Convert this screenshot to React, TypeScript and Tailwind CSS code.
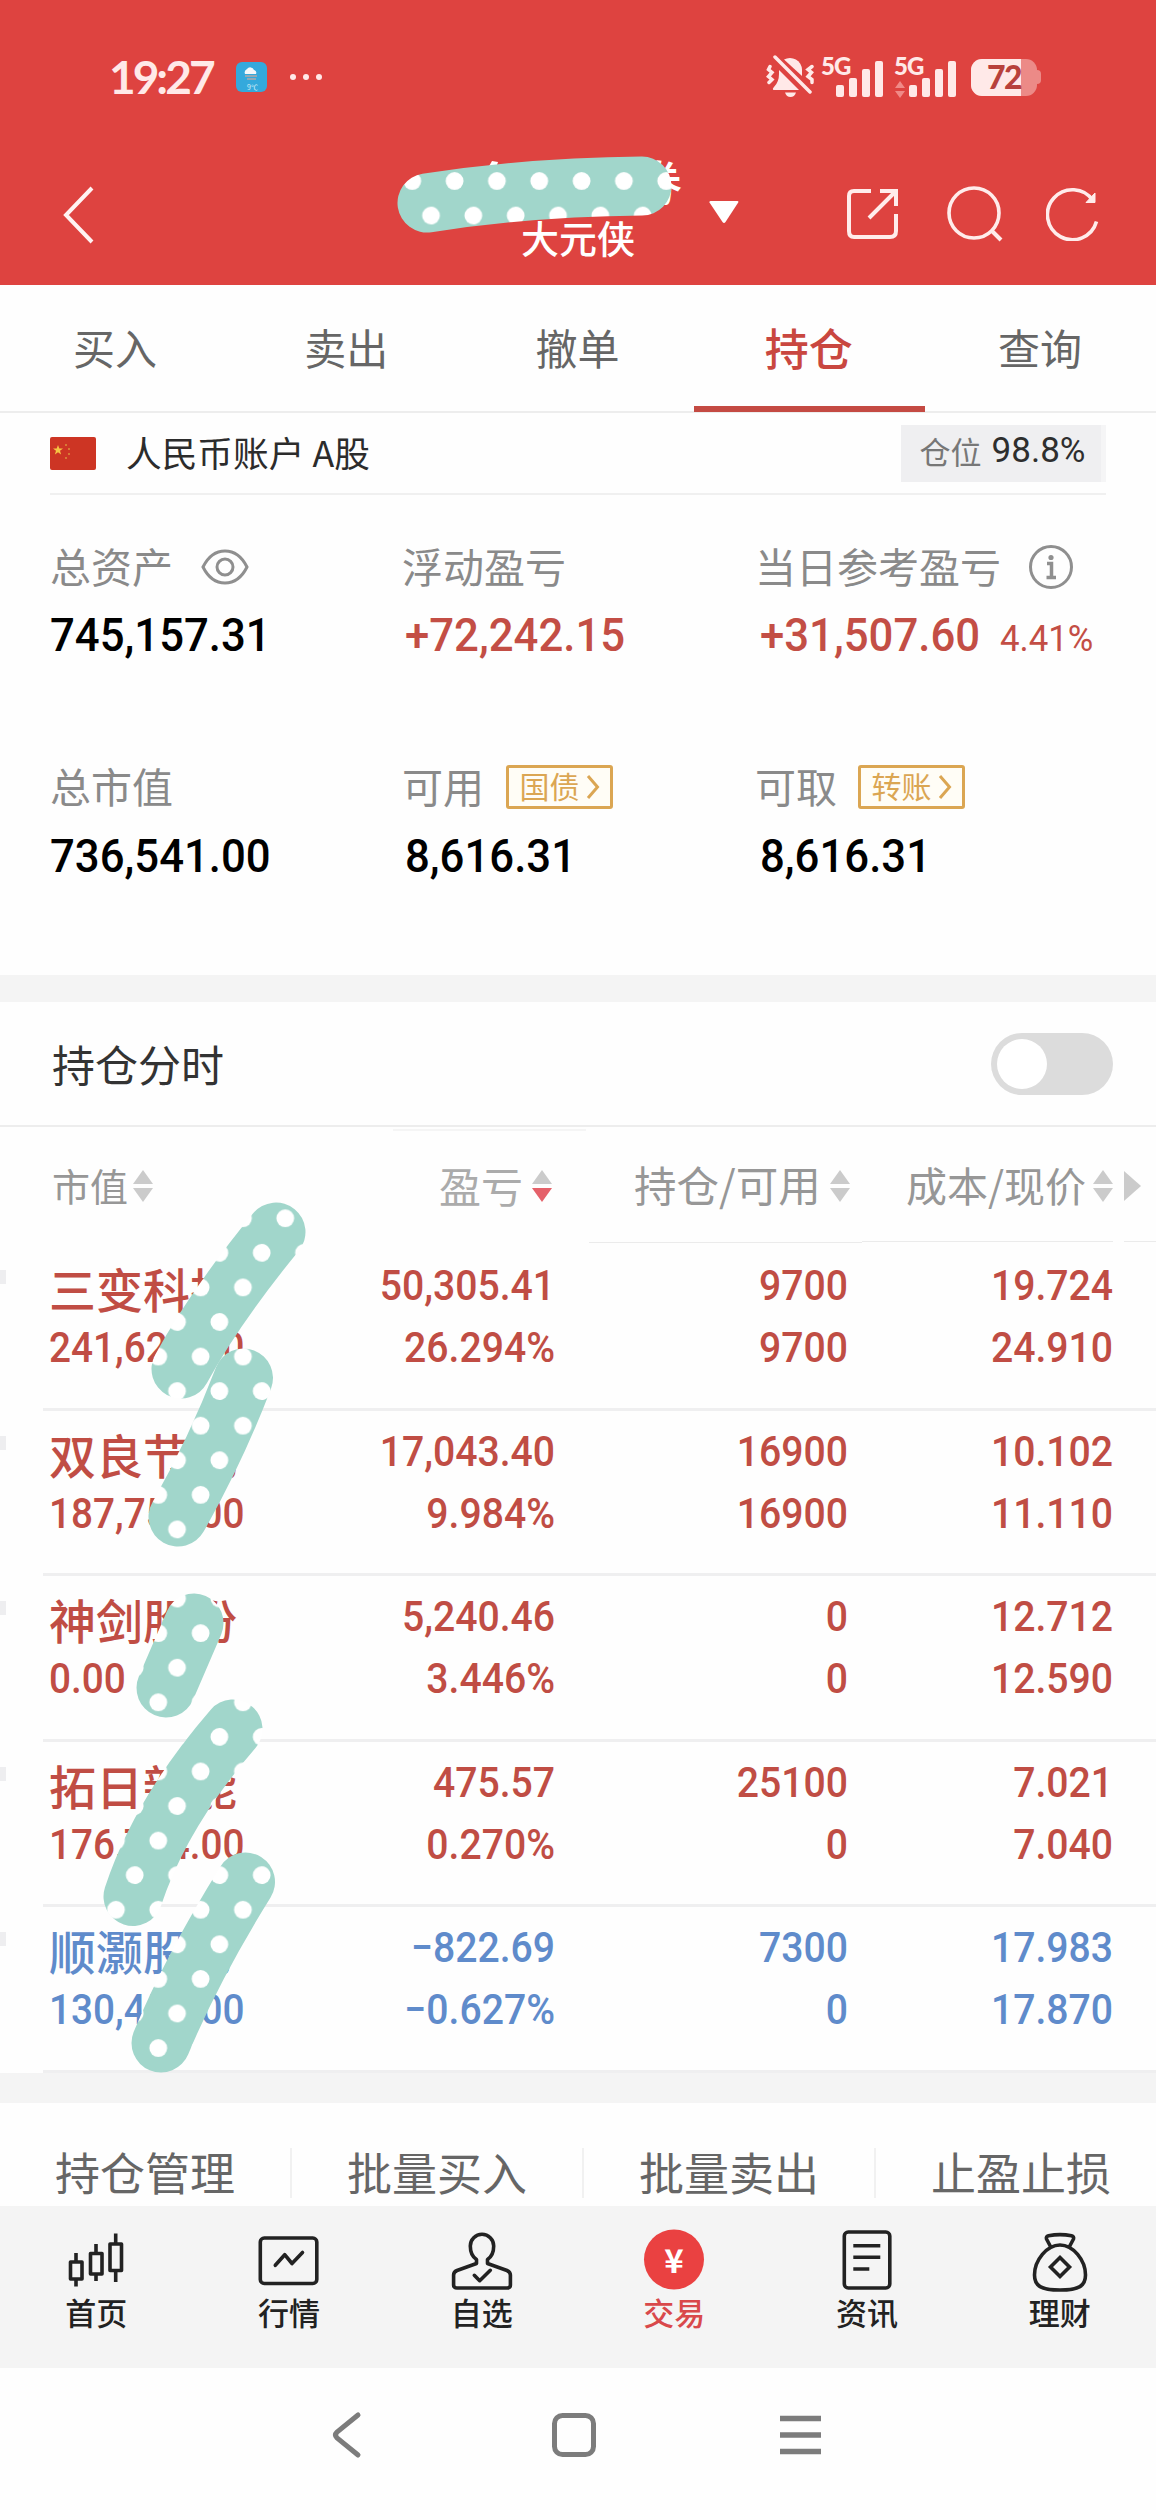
import type { ReactNode } from 'react'
import clsx from 'clsx'

interface Holding {
  name: string
  value: string
  profit: string
  rate: string
  held: string
  usable: string
  cost: string
  price: string
  down?: boolean
}

const TABS = ['买入', '卖出', '撤单', '持仓', '查询']

const HOLDINGS: Holding[] = [
  { name: '三变科技', value: '241,627.00', profit: '50,305.41', rate: '26.294%', held: '9700', usable: '9700', cost: '19.724', price: '24.910' },
  { name: '双良节能', value: '187,759.00', profit: '17,043.40', rate: '9.984%', held: '16900', usable: '16900', cost: '10.102', price: '11.110' },
  { name: '神剑股份', value: '0.00', profit: '5,240.46', rate: '3.446%', held: '0', usable: '0', cost: '12.712', price: '12.590' },
  { name: '拓日新能', value: '176,704.00', profit: '475.57', rate: '0.270%', held: '25100', usable: '0', cost: '7.021', price: '7.040' },
  { name: '顺灏股份', value: '130,451.00', profit: '−822.69', rate: '−0.627%', held: '7300', usable: '0', cost: '17.983', price: '17.870', down: true },
]

const ACTIONS = ['持仓管理', '批量买入', '批量卖出', '止盈止损']

/** Doodle strokes drawn over the private parts, as centre lines. */
const STROKES = [
  'M427 203Q530 187 642 186',
  'M276 1232Q214 1308 181 1369',
  'M243.500 1378Q216 1450 178 1517',
  'M194 1623L166 1688',
  'M233 1729Q161 1812 133 1896.500',
  'M245.500 1882Q192 1968 161 2043',
]

function SignalBars() {
  return (
    <div className="flex h-9 items-end gap-[5px]">
      <span className="h-3 w-2 rounded-[2px] bg-[#ffe9e8]" />
      <span className="h-[19px] w-2 rounded-[2px] bg-[#ffe9e8]" />
      <span className="h-7 w-2 rounded-[2px] bg-[#ffe9e8]" />
      <span className="h-9 w-2 rounded-[2px] bg-[#ffe9e8]" />
    </div>
  )
}

function StatusBar() {
  return (
    <div className="flex h-[154px] items-center pl-[109px] pr-[115px] text-[#ffe9e8]">
      <span className="w-[127px] font-['Lato'] text-[46px] font-bold leading-none tracking-[-3px]">19:27</span>
      <svg width="31" height="30" viewBox="0 0 31 30">
        <rect width="31" height="30" rx="6" fill="#34a9dc" />
        <path d="M9 12a4 4 0 0 1 2-5 4 4 0 0 1 7 1 3 3 0 0 1 2 4z" fill="#f4f8fa" />
        <path d="M9 14h12M11 17h9" stroke="#93a9b5" strokeWidth="2" />
        <text x="11" y="28" fontSize="7" fill="#d9f1fa" fontFamily="Noto Sans CJK SC, sans-serif">9℃</text>
      </svg>
      <div className="ml-[23px] flex gap-[7px]">
        <span className="size-1.5 rounded-full bg-[#ffe9e8]" />
        <span className="size-1.5 rounded-full bg-[#ffe9e8]" />
        <span className="size-1.5 rounded-full bg-[#ffe9e8]" />
      </div>

      <div className="ml-auto flex items-center">
        <svg className="mr-[-2px]" width="50" height="44" viewBox="0 0 50 44" fill="#ffe9e8">
          <path d="M18 4.500A12 12 0 0 1 36 14.500V21z" />
          <path d="M13 15L33 35H7.500Q6 34 8 32Q13 27 13 19z" />
          <path d="M19 37.500h11q-1.500 4.500-5.500 4.500t-5.500-4.500z" />
          <path
            d="M9 2L44 37M4 11.500l-1.500 3 3.500 3-3.500 4 3.500 3-3 3M46 11.500l-4 3 3.500 3-3.500 4 4 3 0 3"
            fill="none"
            stroke="#ffe9e8"
            strokeWidth="3.500"
            strokeLinecap="round"
          />
        </svg>
        <div className="ml-[7px] flex h-[42px] items-start">
          <span className="w-[15px] font-['Lato'] text-[24px] font-black leading-[20px] tracking-[-1px]">5G</span>
          <div className="pt-[5px]"><SignalBars /></div>
        </div>
        <div className="ml-[11px] flex h-[42px] items-start">
          <div className="flex w-[15px] flex-col">
            <span className="font-['Lato'] text-[24px] font-black leading-[20px] tracking-[-1px]">5G</span>
            <svg className="ml-px mt-[5px]" width="10" height="17" viewBox="0 0 10 17" fill="#f08a87">
              <path d="M5 0l5 7H0zM5 17l5-7H0z" />
            </svg>
          </div>
          <div className="pt-[5px]"><SignalBars /></div>
        </div>
        <div className="ml-[15px] flex items-center">
          <div className="flex h-[37px] w-[66px] items-center overflow-hidden rounded-[11px] bg-[#ec8a87]">
            <span className="flex h-full w-[50px] items-center justify-end bg-[#ffe9e8] font-['Lato'] text-[32px] font-black tracking-[-1.5px] text-[#b8413c]">
              72
            </span>
          </div>
          <span className="h-3.5 w-1 rounded-r bg-[#ec8a87]" />
        </div>
      </div>
    </div>
  )
}

function TitleBar() {
  return (
    <div className="flex h-[131px] pl-[61px] text-white">
      <svg className="mt-[31px]" width="34" height="60" viewBox="0 0 34 60" fill="none" stroke="#fff3f2" strokeWidth="4">
        <path d="M31 3L5 30L31 57" />
      </svg>
      <div className="ml-[379px] flex w-[208px] flex-col items-center">
        <span className="w-full text-right text-[48px] font-medium leading-[52px]">券</span>
        <span className="mt-[11px] text-[38px] font-medium leading-[40px]">大元侠</span>
      </div>
      <svg className="ml-[26px] mt-[46px]" width="32" height="24" viewBox="0 0 32 24" fill="#fff">
        <path d="M2.500 1h27q1.500 0 .7 1.500L17.500 22q-1.500 2-3 0L1.500 2.500Q1 1 2.500 1z" />
      </svg>
      <svg className="ml-[106px] mt-[34px]" width="52" height="52" viewBox="0 0 52 52" fill="none" stroke="#ffeceb" strokeWidth="4">
        <path d="M25 3H8Q3 3 3 8V43Q3 49 8 49H44Q50 49 50 43V26M34 3H50V18M50 3L23 30" />
      </svg>
      <svg className="ml-[49px] mt-[31px]" width="56" height="58" viewBox="0 0 56 58" fill="none" stroke="#ffeceb" strokeWidth="3.600">
        <circle cx="27" cy="28" r="25" />
        <path d="M44 45L54 55" strokeWidth="4" />
      </svg>
      <svg className="ml-[43px] mt-[33px]" width="54" height="54" viewBox="0 0 54 54" fill="none" stroke="#ffeceb" strokeWidth="3.600">
        <path d="M50.500 34.500A25 25 0 1 1 47 13.500" />
        <path d="M49 6V15.500H40z" fill="#ffeceb" strokeWidth="1" />
      </svg>
    </div>
  )
}

/** Numbers are set slightly narrower than the face's own width. */
function Amount({ children, red }: { children: ReactNode; red?: boolean }) {
  return (
    <span
      className={clsx(
        "inline-block origin-left scale-x-[0.93] font-['Roboto'] text-[47px] font-medium leading-[50px]",
        red ? 'text-[#c34e45]' : 'text-black',
      )}
    >
      {children}
    </span>
  )
}

function LinkTag({ label }: { label: string }) {
  return (
    <span className="flex h-[44px] w-[107px] items-center justify-center gap-1.5 rounded-[3px] border-[3px] border-[#dba653] bg-[#fffdf6] text-[30px] leading-none text-[#dba653]">
      <span className="-mt-1">{label}</span>
      <svg width="14" height="24" viewBox="0 0 14 24" fill="none" stroke="#dba653" strokeWidth="3">
        <path d="M2 1l9.500 11L2 23" />
      </svg>
    </span>
  )
}

function Stat({ label, extra, children }: { label: string; extra?: ReactNode; children: ReactNode }) {
  return (
    <div>
      <div className="flex h-[44px] items-center text-[41px] leading-[40px] text-[#8a8a8a]">
        <span className="-mt-1">{label}</span>
        {extra}
      </div>
      <div className="mt-[21px] flex h-[50px] items-center pl-[3px]">{children}</div>
    </div>
  )
}

function Summary() {
  return (
    <section className="h-[480px] pl-[50px] pt-[50px]">
      <div className="grid grid-cols-[352px_353px_1fr] gap-y-[105px]">
        <Stat
          label="总资产"
          extra={
            <svg className="ml-[28px]" width="48" height="36" viewBox="0 0 48 36" fill="none" stroke="#8f8f8f" strokeWidth="3">
              <path d="M2 18Q10 2 24 2T46 18Q38 34 24 34T2 18z" />
              <circle cx="24" cy="18" r="8" />
            </svg>
          }
        >
          <div className="-ml-[3px]"><Amount>745,157.31</Amount></div>
        </Stat>
        <Stat label="浮动盈亏"><Amount red>+72,242.15</Amount></Stat>
        <Stat
          label="当日参考盈亏"
          extra={
            <svg className="ml-[27px]" width="46" height="46" viewBox="0 0 46 46" fill="none" stroke="#8f8f8f" strokeWidth="3">
              <circle cx="23" cy="23" r="20.500" />
              <circle cx="23" cy="13.500" r="2.600" fill="#8f8f8f" stroke="none" />
              <path d="M19 19.500h4.500V33M18.500 33.500h9.500" strokeWidth="3.500" />
            </svg>
          }
        >
          <div className="pl-0.5"><Amount red>+31,507.60</Amount></div>
          <span className="ml-[3px] mt-1.5 inline-block origin-left scale-x-[0.94] font-['Roboto'] text-[37px] leading-none text-[#c34e45]">
            4.41%
          </span>
        </Stat>
        <Stat label="总市值"><div className="-ml-[3px] pt-0.5"><Amount>736,541.00</Amount></div></Stat>
        <Stat label="可用" extra={<span className="ml-[22px]"><LinkTag label="国债" /></span>}>
          <div className="pt-0.5"><Amount>8,616.31</Amount></div>
        </Stat>
        <Stat label="可取" extra={<span className="ml-[21px]"><LinkTag label="转账" /></span>}>
          <div className="pl-0.5 pt-0.5"><Amount>8,616.31</Amount></div>
        </Stat>
      </div>
    </section>
  )
}

function SortMark({ active }: { active?: boolean }) {
  return (
    <svg width="22" height="34" viewBox="0 0 22 34" fill="#cbcbcb">
      <path d="M11 1L21 15H1z" />
      <path d="M11 33L21 19H1z" fill={active ? '#e5616a' : '#cbcbcb'} />
    </svg>
  )
}

function TableHead() {
  return (
    <div className="flex h-[118px] flex-col">
      <div className="flex h-1 items-end pl-[393px]">
        <span className="h-[2px] w-[193px] bg-[#f5f5f5]" />
      </div>
      <div className="flex h-[110px] items-center pl-[52px] leading-[44px] text-[#979797]">
        <div className="flex w-[387px] items-center gap-1 text-[38px]">
          <span className="-mt-0.5">市值</span>
          <SortMark />
        </div>
        <div className="flex w-[195px] items-center gap-2 text-[42px] text-[#ababab]">
          <span className="-mt-0.5">盈亏</span>
          <SortMark active />
        </div>
        <div className="flex w-[272px] items-center gap-2 text-[42.500px]">
          <span className="-mt-1">持仓/可用</span>
          <SortMark />
        </div>
        <div className="flex items-center gap-1.5 text-[41px]">
          <span className="-mt-1">成本/现价</span>
          <SortMark />
        </div>
        <svg className="ml-2.5" width="17" height="30" viewBox="0 0 17 30" fill="#cbcbcb">
          <path d="M0 0L17 15L0 30z" />
        </svg>
      </div>
      <div className="flex h-1 items-start">
        <span className="ml-[589px] mt-px h-px w-[273px] bg-[#ebebeb]" />
        <span className="h-px w-[251px] bg-[#ebebeb]" />
        <span className="ml-[11px] h-px w-8 bg-[#ebebeb]" />
      </div>
    </div>
  )
}

function Cell({ top, bottom }: { top: string; bottom: string }) {
  return (
    <div className="origin-right scale-x-[0.91] text-right font-['Roboto'] text-[43px] font-medium leading-[62px]">
      <div>{top}</div>
      <div>{bottom}</div>
    </div>
  )
}

function HoldingRow({ row }: { row: Holding }) {
  return (
    <div className={clsx('flex h-[165.600px] items-start', row.down ? 'text-[#5f8bcb]' : 'text-[#c04d44]')}>
      <span className="mt-[25px] h-3.5 w-1.5 bg-[#eeeef0]" />
      <div className="ml-[37px] grid h-full grow grid-cols-[262px_250px_293px_265px] border-b-[3px] border-[#efeff0] pt-[9px]">
        <div className="pl-1.5">
          <div className="h-[62px] pt-[3px] text-[47px] font-medium leading-[62px]">{row.name}</div>
          <div className="origin-left scale-x-[0.9] font-['Roboto'] text-[43px] font-medium leading-[62px]">{row.value}</div>
        </div>
        <Cell top={row.profit} bottom={row.rate} />
        <Cell top={row.held} bottom={row.usable} />
        <Cell top={row.cost} bottom={row.price} />
      </div>
    </div>
  )
}

function NavItem({ label, active, children }: { label: string; active?: boolean; children: ReactNode }) {
  return (
    <div className={clsx('flex flex-col items-center pt-5', active ? 'text-[#d9494b]' : 'text-[#222]')}>
      <svg width="66" height="66" viewBox="0 0 66 66" fill="none" stroke="#222" strokeWidth="3.600" strokeLinejoin="round">
        {children}
      </svg>
      <span className="text-[31px] font-medium leading-[40px]">{label}</span>
    </div>
  )
}

function BottomNav() {
  return (
    <nav className="grid h-[162px] grid-cols-6 bg-[#f4f4f4]">
      <NavItem label="首页">
        <rect x="7.500" y="36" width="11.500" height="17" />
        <rect x="27.500" y="27.500" width="11.500" height="20.500" />
        <rect x="47" y="18" width="11.500" height="26.500" />
        <path d="M13 27v9M13 53v7.500M33 18v9M33 48v7M52.700 7.500V18M52.700 44.500V56" />
      </NavItem>
      <NavItem label="行情">
        <rect x="4.300" y="12" width="56.500" height="45.500" rx="4" />
        <path d="M19.300 39.300L28.700 28.700L36 37.500L46.500 26.500" strokeLinecap="round" />
      </NavItem>
      <NavItem label="自选">
        <path d="M27.500 37.500V33.500C23 30.500 21.300 26 21.300 20A11.700 11.700 0 0 1 44.700 20C44.700 26 43 30.500 38.500 33.500V37.500L58 44.500Q61.400 46 61.400 49V59Q61.400 62 58 62H8Q4.600 62 4.600 59V49Q4.600 46 8 44.500Z" />
        <path d="M25.300 49.300L30.700 54.700L41.300 44.300" strokeLinecap="round" />
      </NavItem>
      <NavItem label="交易" active>
        <circle cx="33" cy="33.500" r="30" fill="#ea4141" stroke="none" />
        <text
          x="33"
          y="46.500"
          textAnchor="middle"
          fontSize="33"
          fontWeight="700"
          fontFamily="Noto Sans CJK SC, sans-serif"
          fill="#fff"
          stroke="none"
        >
          ¥
        </text>
      </NavItem>
      <NavItem label="资讯">
        <rect x="10.300" y="6" width="45.500" height="56" rx="4" />
        <path d="M19.300 19.700H46.300M19.300 31.300H46.300M19.300 43H35.300" />
      </NavItem>
      <NavItem label="理财">
        <path d="M33 19C46 19 58.500 34 58.500 49C58.500 60 52 64 33 64S7.500 60 7.500 49C7.500 34 20 19 33 19z" />
        <path d="M23.500 20.500L19.500 13Q18.700 10.600 21.500 9.800Q33 7.500 44.500 9.800Q47.300 10.600 46.500 13L42.500 20.500" />
        <path d="M33 31.500L42.500 41L33 50.500L23.500 41z" strokeLinejoin="miter" />
      </NavItem>
    </nav>
  )
}

function SystemNav() {
  return (
    <div className="flex h-[142px] items-start pl-[330px] pt-[43px]">
      <svg width="32" height="48" viewBox="0 0 32 48" fill="none" stroke="#7c7c7c" strokeWidth="5" strokeLinecap="round">
        <path d="M28 4L7 21Q4 24 7 27L28 44" />
      </svg>
      <svg className="ml-[188px]" width="48" height="48" viewBox="0 0 48 48" fill="none" stroke="#7c7c7c" strokeWidth="5">
        <rect x="4.500" y="4.500" width="39" height="39" rx="8" />
      </svg>
      <svg className="ml-[180px]" width="46" height="48" viewBox="0 0 46 48" fill="none" stroke="#7c7c7c" strokeWidth="5.500">
        <path d="M2 7.500H43M2 24H43M2 40.500H43" />
      </svg>
    </div>
  )
}

function Doodles() {
  return (
    <svg className="pointer-events-none absolute left-0 top-0" width="1156" height="2510" viewBox="0 0 1156 2510" fill="none">
      <defs>
        <pattern id="dots" x="10.130" y="146.400" width="42.330" height="69.150" patternUnits="userSpaceOnUse">
          <rect width="43" height="70" fill="#a1d6cb" />
          <circle cx="21.170" cy="34.600" r="8.900" fill="#fff" />
          <circle cx="-2.400" cy="0" r="8.900" fill="#fff" />
          <circle cx="39.930" cy="0" r="8.900" fill="#fff" />
          <circle cx="-2.400" cy="69.150" r="8.900" fill="#fff" />
          <circle cx="39.930" cy="69.150" r="8.900" fill="#fff" />
        </pattern>
      </defs>
      <path d="M492 161l6 1-2 6h-8z" fill="#fff" />
      {STROKES.map((d) => (
        <path key={d} d={d} stroke="url(#dots)" strokeWidth="59" strokeLinecap="round" />
      ))}
    </svg>
  )
}

export default function App() {
  return (
    <div className="relative h-[2510px] w-[1156px] overflow-hidden bg-[#fefefe] font-['Noto_Sans_CJK_SC',sans-serif]">
      <header className="h-[285px] bg-[#de4340]">
        <StatusBar />
        <TitleBar />
      </header>

      <div className="grid h-[128px] grid-cols-5 border-b-2 border-[#ededed]">
        {TABS.map((tab) => (
          <div
            key={tab}
            className={clsx(
              'flex h-[127px] justify-center border-b-[6px] pr-px pt-8 leading-[60px]',
              tab === '持仓'
                ? 'border-[#c44a43] text-[44px] font-medium text-[#c94740]'
                : 'border-transparent text-[42px] text-[#666]',
            )}
          >
            {tab}
          </div>
        ))}
      </div>

      <div className="mx-[50px] flex h-[82px] items-center border-b-2 border-[#f0f0f0]">
        <svg width="46" height="33" viewBox="0 0 46 33">
          <rect width="46" height="33" rx="2" fill="#cd3524" />
          <path d="M8 8l1.300 3.500h3.700l-3 2.300 1.100 3.700L8 15.300l-3.100 2.200L6 13.800l-3-2.300h3.700z" fill="#f6c544" />
          <path d="M15 7h2v2h-2zM18 11h2v2h-2zM18 16h2v2h-2zM15 20h2v2h-2z" fill="#d87a35" />
        </svg>
        <span className="-mt-0.5 ml-[30px] text-[35.700px] text-[#2c2c2c]">人民币账户 A股</span>
        <div className="ml-auto flex h-[57px] w-[205px] items-center justify-center gap-2.5 border-r-[5px] border-[#f5f5f6] bg-[#efeff1] pl-[3px]">
          <span className="-mt-1 text-[31px] text-[#777]">仓位</span>
          <span className="-mt-1 font-['Roboto'] text-[35px] text-[#2e2e2e]">98.8%</span>
        </div>
      </div>

      <Summary />
      <div className="h-[27px] bg-[#f4f4f4]" />

      <div className="flex h-[125px] items-center justify-between border-b-2 border-[#ededed] pl-[52px] pr-[43px]">
        <span className="text-[43px] text-[#333]">持仓分时</span>
        <div className="flex h-[62px] w-[122px] items-center rounded-full bg-[#dcdcdc] pl-1.5">
          <span className="size-[50px] rounded-full bg-white" />
        </div>
      </div>

      <TableHead />
      {HOLDINGS.map((row) => (
        <HoldingRow key={row.name} row={row} />
      ))}
      <div className="h-[30px] bg-[#f4f4f4]" />

      <div className="grid h-[103px] w-[1168px] grid-cols-4 pt-[45px] text-[45px] leading-[47px] text-[#666]">
        {ACTIONS.map((action) => (
          <div key={action} className="h-[50px] border-r-2 border-[#f1f1f1] text-center">
            {action}
          </div>
        ))}
      </div>

      <BottomNav />
      <SystemNav />
      <Doodles />
    </div>
  )
}
